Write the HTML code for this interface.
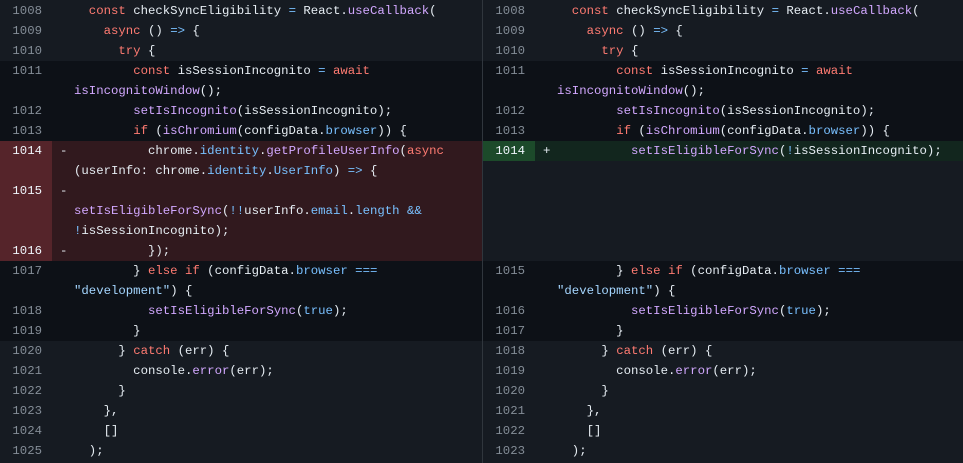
<!DOCTYPE html>
<html><head><meta charset="utf-8"><style>
*{margin:0;padding:0;box-sizing:border-box}
body{width:963px;height:463px;background:#161b22;overflow:hidden;font-family:"Liberation Mono",monospace;font-size:12.33px;color:#e6edf3;position:relative}
.pane{position:absolute;top:1px;width:482px}
#L{left:0}
#R{left:483px;width:480px}
.div{position:absolute;left:482px;top:0;width:1px;height:463px;background:#30363d}
.r{position:relative;height:20px;line-height:20px;white-space:pre}
.n{position:absolute;left:0;width:52px;height:100%;text-align:right;padding-right:10px;color:#848d97}
.s{position:absolute;left:60px}
.c{position:absolute;left:74px}
.ctx{background:#0d1117}
.del{background:#31191e}
.del .n{background:#55242a;color:#f0f6fc}
.add{background:#12261e}
.add .n{background:#1c4a2a;color:#f0f6fc}
.emp{background:#161b22}
.k{color:#ff7b72}.f{color:#d2a8ff}.p{color:#79c0ff}.st{color:#a5d6ff}
</style></head><body>
<div class="div"></div>
<div class="pane" id="L">
<div class="r"><span class="n">1008</span><span class="c">  <span class="k">const</span> checkSyncEligibility <span class="p">=</span> React.<span class="f">useCallback</span>(</span></div>
<div class="r"><span class="n">1009</span><span class="c">    <span class="k">async</span> () <span class="p">=&gt;</span> {</span></div>
<div class="r"><span class="n">1010</span><span class="c">      <span class="k">try</span> {</span></div>
<div class="r ctx"><span class="n">1011</span><span class="c">        <span class="k">const</span> isSessionIncognito <span class="p">=</span> <span class="k">await</span></span></div>
<div class="r ctx"><span class="n"></span><span class="c"><span class="f">isIncognitoWindow</span>();</span></div>
<div class="r ctx"><span class="n">1012</span><span class="c">        <span class="f">setIsIncognito</span>(isSessionIncognito);</span></div>
<div class="r ctx"><span class="n">1013</span><span class="c">        <span class="k">if</span> (<span class="f">isChromium</span>(configData.<span class="p">browser</span>)) {</span></div>
<div class="r del"><span class="n">1014</span><span class="s">-</span><span class="c">          chrome.<span class="p">identity</span>.<span class="f">getProfileUserInfo</span>(<span class="k">async</span></span></div>
<div class="r del"><span class="n"></span><span class="c">(userInfo: chrome.<span class="p">identity</span>.<span class="p">UserInfo</span>) <span class="p">=&gt;</span> {</span></div>
<div class="r del"><span class="n">1015</span><span class="s">-</span></div>
<div class="r del"><span class="n"></span><span class="c"><span class="f">setIsEligibleForSync</span>(<span class="p">!!</span>userInfo.<span class="p">email</span>.<span class="p">length</span> <span class="p">&amp;&amp;</span></span></div>
<div class="r del"><span class="n"></span><span class="c"><span class="p">!</span>isSessionIncognito);</span></div>
<div class="r del"><span class="n">1016</span><span class="s">-</span><span class="c">          });</span></div>
<div class="r ctx"><span class="n">1017</span><span class="c">        } <span class="k">else</span> <span class="k">if</span> (configData.<span class="p">browser</span> <span class="p">===</span></span></div>
<div class="r ctx"><span class="n"></span><span class="c"><span class="st">"development"</span>) {</span></div>
<div class="r ctx"><span class="n">1018</span><span class="c">          <span class="f">setIsEligibleForSync</span>(<span class="p">true</span>);</span></div>
<div class="r ctx"><span class="n">1019</span><span class="c">        }</span></div>
<div class="r"><span class="n">1020</span><span class="c">      } <span class="k">catch</span> (err) {</span></div>
<div class="r"><span class="n">1021</span><span class="c">        console.<span class="f">error</span>(err);</span></div>
<div class="r"><span class="n">1022</span><span class="c">      }</span></div>
<div class="r"><span class="n">1023</span><span class="c">    },</span></div>
<div class="r"><span class="n">1024</span><span class="c">    []</span></div>
<div class="r"><span class="n">1025</span><span class="c">  );</span></div>
</div>
<div class="pane" id="R">
<div class="r"><span class="n">1008</span><span class="c">  <span class="k">const</span> checkSyncEligibility <span class="p">=</span> React.<span class="f">useCallback</span>(</span></div>
<div class="r"><span class="n">1009</span><span class="c">    <span class="k">async</span> () <span class="p">=&gt;</span> {</span></div>
<div class="r"><span class="n">1010</span><span class="c">      <span class="k">try</span> {</span></div>
<div class="r ctx"><span class="n">1011</span><span class="c">        <span class="k">const</span> isSessionIncognito <span class="p">=</span> <span class="k">await</span></span></div>
<div class="r ctx"><span class="n"></span><span class="c"><span class="f">isIncognitoWindow</span>();</span></div>
<div class="r ctx"><span class="n">1012</span><span class="c">        <span class="f">setIsIncognito</span>(isSessionIncognito);</span></div>
<div class="r ctx"><span class="n">1013</span><span class="c">        <span class="k">if</span> (<span class="f">isChromium</span>(configData.<span class="p">browser</span>)) {</span></div>
<div class="r add"><span class="n">1014</span><span class="s">+</span><span class="c">          <span class="f">setIsEligibleForSync</span>(<span class="p">!</span>isSessionIncognito);</span></div>
<div class="r emp"></div><div class="r emp"></div><div class="r emp"></div><div class="r emp"></div><div class="r emp"></div>
<div class="r ctx"><span class="n">1015</span><span class="c">        } <span class="k">else</span> <span class="k">if</span> (configData.<span class="p">browser</span> <span class="p">===</span></span></div>
<div class="r ctx"><span class="n"></span><span class="c"><span class="st">"development"</span>) {</span></div>
<div class="r ctx"><span class="n">1016</span><span class="c">          <span class="f">setIsEligibleForSync</span>(<span class="p">true</span>);</span></div>
<div class="r ctx"><span class="n">1017</span><span class="c">        }</span></div>
<div class="r"><span class="n">1018</span><span class="c">      } <span class="k">catch</span> (err) {</span></div>
<div class="r"><span class="n">1019</span><span class="c">        console.<span class="f">error</span>(err);</span></div>
<div class="r"><span class="n">1020</span><span class="c">      }</span></div>
<div class="r"><span class="n">1021</span><span class="c">    },</span></div>
<div class="r"><span class="n">1022</span><span class="c">    []</span></div>
<div class="r"><span class="n">1023</span><span class="c">  );</span></div>
</div>
</body></html>
